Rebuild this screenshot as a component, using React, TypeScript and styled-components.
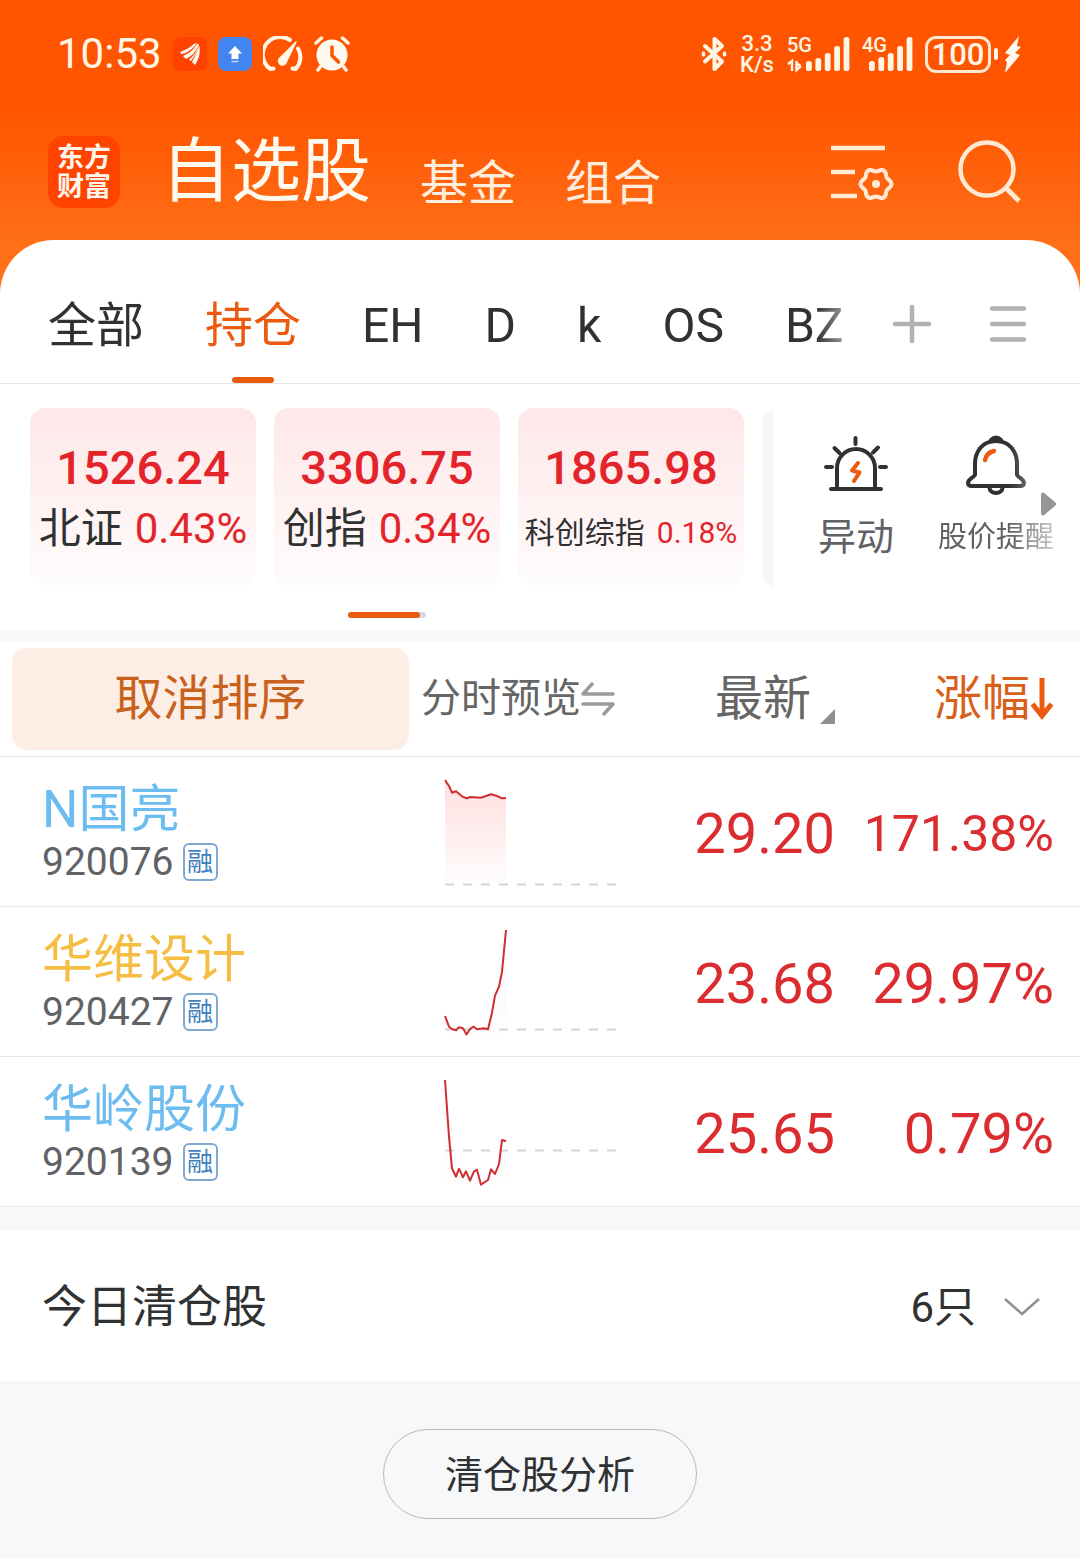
import React from "react";
import styled, { createGlobalStyle, css } from "styled-components";

const GlobalStyle = createGlobalStyle`
  * { box-sizing: border-box; }
  body {
    margin: 0;
    background: #f7f8fa;
    color: #303133;
    font-family: Roboto, "Noto Sans CJK SC", "Liberation Sans", sans-serif;
  }
  button {
    margin: 0;
    padding: 0;
    border: 0;
    background: none;
    color: inherit;
    font: inherit;
    cursor: pointer;
  }
  svg { display: block; flex: none; }
`;

const Page = styled.div`
  background: linear-gradient(180deg, #ff5500 0, #ff5500 110px, #ff7019 250px, #ff7019 300px, #f7f8fa 300px);
`;

/* ---------- status bar ---------- */

const StatusBar = styled.div`
  display: flex;
  align-items: center;
  justify-content: space-between;
  height: 108px;
  padding: 0 58px 0 57px;
  color: #fff6e6;
`;

const StatusGroup = styled.div<{ $gap: number }>`
  display: flex;
  align-items: center;
  gap: ${(p) => p.$gap}px;
`;

const Clock = styled.time`
  font-size: 42px;
  line-height: 48px;
`;

const NetSpeed = styled.div`
  width: 36px;
  font-size: 22px;
  font-weight: 500;
  line-height: 21px;
  text-align: center;
`;

const Signal = styled.div`
  position: relative;
`;

const SignalLabel = styled.span`
  position: absolute;
  top: 0;
  left: 0;
  font-size: 20px;
  font-weight: 500;
  line-height: 20px;
`;

const Power = styled.div`
  display: flex;
  align-items: center;
  gap: 6px;
`;

const Battery = styled.div`
  display: flex;
  align-items: center;
  gap: 3px;
  &::after {
    content: "";
    width: 4px;
    height: 12px;
    border-radius: 2px;
    background: #fff6e6;
  }
`;

const BatteryBody = styled.span`
  width: 66px;
  height: 37px;
  border: 3px solid #ffe8d2;
  border-radius: 11px;
  font-size: 31px;
  font-weight: 500;
  line-height: 32px;
  text-align: center;
`;

/* ---------- header ---------- */

const Header = styled.header`
  display: flex;
  align-items: center;
  height: 132px;
  padding: 0 58px 4px 48px;
  color: #fffaf0;
`;

const Logo = styled.a`
  display: grid;
  place-content: center;
  width: 72px;
  height: 72px;
  padding-top: 2px;
  border-radius: 15px;
  background: #ff4400;
  color: #fff6ec;
  font-size: 27px;
  font-weight: 700;
  line-height: 29px;
  text-align: center;
  text-decoration: none;
`;

const Sections = styled.nav`
  display: flex;
  flex: 1;
  align-items: flex-end;
  gap: 49px;
  margin-left: 41px;
`;

const SectionLink = styled.a<{ $current?: boolean }>`
  color: ${(p) => (p.$current ? "#fffaf0" : "#ffeedd")};
  font-size: ${(p) => (p.$current ? 70 : 48)}px;
  line-height: ${(p) => (p.$current ? 72 : 48)}px;
  text-decoration: none;
  white-space: nowrap;
`;

const HeaderTools = styled.div`
  display: flex;
  align-items: center;
  gap: 64px;
`;

/* ---------- white sheet ---------- */

const Sheet = styled.main`
  overflow: hidden;
  border-radius: 54px 54px 0 0;
  background: #fff;
`;

const TabBar = styled.div`
  display: flex;
  align-items: center;
  height: 144px;
  padding: 0 48px;
  border-bottom: 1px solid #e4e5e7;
`;

const Tabs = styled.nav`
  display: flex;
  flex: 1;
  gap: 61px;
  height: 143px;
  overflow: hidden;
  mask-image: linear-gradient(90deg, #000 0, #000 calc(100% - 76px), transparent calc(100% - 20px));
`;

const Tab = styled.button<{ $active?: boolean }>`
  display: flex;
  flex: none;
  flex-direction: column;
  align-items: center;
  padding-top: 56px;
  color: ${(p) => (p.$active ? "#ea5b10" : "#303133")};
  font-size: 48px;
  line-height: 60px;
  ${(p) =>
    p.$active &&
    css`
      &::after {
        content: "";
        width: 42px;
        height: 6px;
        margin-top: auto;
        border-radius: 3px;
        background: #ea5b10;
      }
    `}
`;

const TabTools = styled.div`
  display: flex;
  align-items: center;
  gap: 56px;
  padding: 24px 4px 0 0;
`;

const Overview = styled.section`
  display: flex;
  height: 246px;
  padding-top: 24px;
`;

const Indices = styled.div`
  display: flex;
  flex: 1;
  flex-direction: column;
  align-items: center;
  min-width: 0;
  gap: 25px;
`;

const IndexList = styled.div`
  display: flex;
  align-self: stretch;
  gap: 18px;
  padding-left: 30px;
  overflow: hidden;
`;

const IndexCard = styled.button<{ $flat?: boolean }>`
  display: flex;
  flex: none;
  flex-direction: column;
  align-items: center;
  gap: 4px;
  width: 226px;
  height: 179px;
  padding-top: 32px;
  border-radius: 15px;
  background: ${(p) => (p.$flat ? "#f7f7fa" : "linear-gradient(180deg, #fee8e9 0%, #fff3f3 60%, #fefcfd 100%)")};
`;

const IndexValue = styled.strong`
  color: #e3242a;
  font-size: 47px;
  font-weight: 500;
  line-height: 56px;
`;

const IndexLabel = styled.span<{ $small?: boolean }>`
  display: flex;
  align-items: center;
  gap: 12px;
  height: 56px;
  padding-top: ${(p) => (p.$small ? 10 : 2)}px;
  font-size: ${(p) => (p.$small ? 30 : 42)}px;
  line-height: 56px;
  white-space: nowrap;
`;

const Rise = styled.span`
  color: #e3242a;
`;

const ScrollTrack = styled.div`
  width: 78px;
  height: 6px;
  border-radius: 3px;
  background: #d8d9dc;
  &::before {
    content: "";
    display: block;
    width: 72px;
    height: 6px;
    border-radius: 3px;
    background: #ea5b10;
  }
`;

const Actions = styled.div`
  position: relative;
  display: flex;
  width: 306px;
  padding: 27px 14px 0 12px;
`;

const ActionButton = styled.button<{ $fade?: boolean }>`
  display: flex;
  flex: 1;
  flex-direction: column;
  align-items: center;
  gap: 16px;
  height: 128px;
  color: #606266;
  font-size: ${(p) => (p.$fade ? 29 : 38)}px;
  line-height: 52px;
  white-space: nowrap;
  ${(p) =>
    p.$fade &&
    css`
      mask-image: linear-gradient(90deg, #000 60%, rgba(0, 0, 0, 0.25) 95%);
    `}
`;

const MoreArrow = styled.svg`
  position: absolute;
  top: 84px;
  right: 24px;
`;

const Divider = styled.div<{ $h: number }>`
  height: ${(p) => p.$h}px;
  background: #f7f8fa;
`;

/* ---------- stock table ---------- */

const StockTable = styled.table`
  width: 100%;
  border-spacing: 0;
  table-layout: fixed;
`;

const Head = styled.th<{ $w?: number; $align?: string; $pad?: string }>`
  width: ${(p) => (p.$w ? p.$w + "px" : "auto")};
  height: 115px;
  padding: ${(p) => p.$pad || "0"};
  border-bottom: 1px solid #e8e9eb;
  font-weight: 400;
  text-align: ${(p) => p.$align || "left"};
`;

const CancelSort = styled.button`
  display: block;
  width: 100%;
  height: 102px;
  border-radius: 15px;
  background: #fdeee5;
  color: #c8611c;
  font-size: 48px;
  line-height: 60px;
`;

const SortButton = styled.button<{ $active?: boolean; $small?: boolean }>`
  display: inline-flex;
  align-items: center;
  color: ${(p) => (p.$active ? "#d8601a" : "#666")};
  font-size: ${(p) => (p.$small ? 40 : 48)}px;
  line-height: 60px;
  white-space: nowrap;
`;

const Corner = styled.span`
  align-self: flex-end;
  margin: 0 0 5px 9px;
  border-bottom: 15px solid #8e8e93;
  border-left: 15px solid transparent;
`;

const Cell = styled.td<{ $pad?: string }>`
  height: 150px;
  padding: ${(p) => p.$pad || "0"};
  border-bottom: 1px solid #e8e9eb;
  vertical-align: middle;
`;

const StockName = styled.div<{ $color: string }>`
  padding-top: 2px;
  color: ${(p) => p.$color};
  font-size: 51px;
  line-height: 58px;
`;

const StockCode = styled.div`
  display: flex;
  align-items: center;
  gap: 9px;
  color: #606266;
  font-size: 39px;
  line-height: 46px;
`;

const Margin = styled.span`
  width: 35px;
  height: 38px;
  border: 2px solid #7fa9d0;
  border-radius: 6px;
  color: #3f7fbd;
  font-size: 26px;
  line-height: 35px;
  text-align: center;
`;

const Figure = styled.td<{ $tight?: boolean; $end?: boolean }>`
  padding: 4px ${(p) => (p.$end ? 26 : 0)}px 0 0;
  border-bottom: 1px solid #e8e9eb;
  color: #db2c30;
  font-size: ${(p) => (p.$tight ? 50 : 56)}px;
  line-height: 64px;
  text-align: right;
`;

/* ---------- cleared positions ---------- */

const Cleared = styled.button`
  display: flex;
  align-items: center;
  justify-content: space-between;
  width: 100%;
  height: 150px;
  padding: 4px 40px 0 42px;
  font-size: 45px;
  line-height: 60px;
`;

const ClearedCount = styled.span`
  display: flex;
  align-items: center;
  gap: 28px;
  font-size: 42px;
`;

const Footer = styled.footer`
  display: flex;
  justify-content: center;
  padding: 48px 0 40px;
  background: #f7f8fa;
`;

const Analysis = styled.button`
  height: 90px;
  padding: 2px 61px 0;
  border: 1px solid #b9bbbf;
  border-radius: 45px;
  font-size: 38px;
  line-height: 56px;
`;

/* ---------- drawings ---------- */

type BarsProps = { x: number; tops: number[]; width: number; traffic?: boolean };

const Bars = ({ x, tops, width, traffic }: BarsProps) => (
  <svg width={width} height="38" viewBox={`0 0 ${width} 38`} aria-hidden="true">
    {tops.map((top, i) => (
      <rect key={i} x={x + i * 9.4} y={top} width="5.8" height={36 - top} rx="2.6" fill="#fff6e6" />
    ))}
    {traffic && <path d="M1 29l4-3v10M9.500 26v9l4.500-4M9.500 28l4 3" fill="none" stroke="#fff6e6" strokeWidth="2.400" />}
  </svg>
);

const gearPath = (() => {
  const points: string[] = [];
  for (let i = 0; i <= 72; i++) {
    const a = (i / 72) * Math.PI * 2;
    const r = 14 + 1.5 * Math.cos(6 * a);
    points.push(`${(45 + r * Math.cos(a)).toFixed(1)} ${(44 + r * Math.sin(a)).toFixed(1)}`);
  }
  return `M${points.join("L")}Z`;
})();

type Stock = {
  name: string;
  code: string;
  color: string;
  price: string;
  change: string;
  base: number;
  tint: number;
  line: string;
};

const stocks: Stock[] = [
  {
    name: "N国亮",
    code: "920076",
    color: "#6cbcf0",
    price: "29.20",
    change: "171.38%",
    base: 127,
    tint: 0.16,
    line: "0 23 4 29 7 35.7 11 34.3 18 40 22 41.3 25 40 36 40.7 41 39 46 37.3 52 39 57 41.3 61 41",
  },
  {
    name: "华维设计",
    code: "920427",
    color: "#f5bd42",
    price: "23.68",
    change: "29.97%",
    base: 122,
    tint: 0.05,
    line: "0 109 4 119.7 7 122 11 123.3 14 120.3 18 121.3 21.5 127.5 25 122 28.5 119.7 32 122.3 39 121.3 43 122.3 47 105.7 50 88.7 54 79.7 57 64.7 61 23",
  },
  {
    name: "华岭股份",
    code: "920139",
    color: "#6cbcf0",
    price: "25.65",
    change: "0.79%",
    base: 93,
    tint: 0.03,
    line: "0 23 4 79.7 7 111.3 11 119.7 14 111.7 18 120.3 21 114.3 25 123.7 29 114.3 32 112.7 36 127.7 43 123 46 112.3 50 117 54 107 57 83 61 84.3",
  },
];

const Spark = ({ stock }: { stock: Stock }) => (
  <svg width="172" height="149" viewBox="0 0 172 149" overflow="visible" role="img" aria-label={stock.name}>
    <defs>
      <linearGradient id={`fill-${stock.code}`} x1="0" y1="0" x2="0" y2="1">
        <stop offset="0" stopColor="#f33" stopOpacity={stock.tint} />
        <stop offset="1" stopColor="#f33" stopOpacity="0.01" />
      </linearGradient>
    </defs>
    <path d={`M0 127L${stock.line} 61 127Z`} fill={`url(#fill-${stock.code})`} />
    <path d={`M0 ${stock.base + 0.5}H172`} stroke="#d3d5d9" strokeWidth="2" strokeDasharray="9 9" />
    <polyline points={stock.line} fill="none" stroke="#cf2e30" strokeWidth="2" strokeLinejoin="round" />
  </svg>
);

const indices = [
  { value: "1526.24", label: "北证", change: "0.43%" },
  { value: "3306.75", label: "创指", change: "0.34%" },
  { value: "1865.98", label: "科创综指", change: "0.18%", small: true },
];

export default function App() {
  return (
    <Page>
      <GlobalStyle />
      <StatusBar>
        <StatusGroup $gap={11}>
          <Clock>10:53</Clock>
          <svg width="34" height="34" viewBox="0 0 34 34" aria-hidden="true">
            <rect width="34" height="34" rx="7" fill="#ff4200" />
            <g fill="#fff6ec">
              <path d="M7 15C13 13 17 10 21 7L24 6C20 12 13 17 8 17Z" />
              <path d="M10 19C17 16 21 12 24 7L26 7C24 14 18 20 13 22Z" />
              <path d="M16 23C21 18 25 13 26 8C28 15 26 22 22 28L19 25C21 21 23 17 24 14C22 18 20 21 18 24Z" />
            </g>
          </svg>
          <svg width="34" height="34" viewBox="0 0 34 34" aria-hidden="true">
            <rect width="34" height="34" rx="8" fill="#4285f0" />
            <path d="M17 9l7 7.5h-3.500V22h-7v-5.500H10z" fill="#fff" />
            <path d="M13.500 24.500h7" stroke="#c5dbfa" strokeWidth="1.500" />
          </svg>
          <svg width="40" height="36" viewBox="0 0 40 36" fill="none" stroke="#fff6e6" strokeWidth="4" strokeLinecap="round" strokeLinejoin="round" aria-hidden="true">
            <path d="M10.500 32.500L7.500 33A17 17 0 0 1 27 4M35 12.500a17 17 0 0 1-2.500 20.500l-3-.5" />
            <path d="M33 6L17.500 21.500a4 4 0 1 0 6 4z" fill="#fff6e6" strokeWidth="1.500" />
          </svg>
          <svg width="36" height="36" viewBox="0 0 36 36" fill="none" stroke="#fff6e6" strokeLinecap="round" aria-hidden="true">
            <circle cx="18" cy="19" r="15.500" fill="#fffaf0" stroke="none" />
            <path d="M2 7l5.500-5M34 7l-5.500-5M7 30l-3 4M29 30l3 4" strokeWidth="3.500" />
            <path d="M18 11v8.500l6.500 6.500" stroke="#ff5500" strokeWidth="3.500" />
          </svg>
        </StatusGroup>
        <StatusGroup $gap={12}>
          <svg width="26" height="36" viewBox="0 0 26 36" fill="none" stroke="#fff6e6" strokeWidth="4" strokeLinejoin="round" strokeLinecap="round" aria-hidden="true">
            <path d="M4 10l17 15.500L13.500 33V3L21 10 4 25.500" />
            <path d="M2.500 17v2M23.500 17v2" strokeWidth="3.500" />
          </svg>
          <NetSpeed>3.3 K/s</NetSpeed>
          <Signal>
            <SignalLabel>5G</SignalLabel>
            <Bars width={63} x={19} tops={[26, 23, 18, 11, 2]} traffic />
          </Signal>
          <Signal>
            <SignalLabel>4G</SignalLabel>
            <Bars width={51} x={7} tops={[26, 22, 18, 11, 2]} />
          </Signal>
          <Power>
            <Battery>
              <BatteryBody>100</BatteryBody>
            </Battery>
            <svg width="18" height="38" viewBox="0 0 18 38" aria-hidden="true">
              <path d="M15 1L1 18l5 2-5 5 2 2-2 11L16 20l-5-2 6-6-4-1z" fill="#fffaf0" />
            </svg>
          </Power>
        </StatusGroup>
      </StatusBar>

      <Header>
        <Logo href="#home">
          东方
          <br />
          财富
        </Logo>
        <Sections>
          <SectionLink href="#stocks" $current>自选股</SectionLink>
          <SectionLink href="#funds">基金</SectionLink>
          <SectionLink href="#portfolio">组合</SectionLink>
        </Sections>
        <HeaderTools>
          <button aria-label="列表设置">
            <svg width="63" height="64" viewBox="0 0 63 64" fill="none" stroke="#ffe9d2" strokeWidth="4.500">
              <path d="M0 8h54M0 32h24M0 56h26" />
              <path d={gearPath} strokeWidth="4" />
              <circle cx="45" cy="44" r="4" fill="#ffe9d2" stroke="none" />
            </svg>
          </button>
          <button aria-label="搜索">
            <svg width="64" height="64" viewBox="0 0 64 64" fill="none" stroke="#ffe9d2" strokeWidth="4.500">
              <circle cx="29" cy="29" r="26.500" />
              <path d="M47 47l14 14" strokeWidth="5" />
            </svg>
          </button>
        </HeaderTools>
      </Header>

      <Sheet>
        <TabBar>
          <Tabs>
            <Tab>全部</Tab>
            <Tab $active>持仓</Tab>
            <Tab>EH</Tab>
            <Tab>D</Tab>
            <Tab>k</Tab>
            <Tab>OS</Tab>
            <Tab>BZ</Tab>
          </Tabs>
          <TabTools>
            <button aria-label="添加分组">
              <svg width="40" height="40" viewBox="0 0 40 40" stroke="#b2b2b2" strokeWidth="4.500" strokeLinecap="round">
                <path d="M20 3v34M3 20h34" />
              </svg>
            </button>
            <button aria-label="分组菜单">
              <svg width="40" height="40" viewBox="0 0 40 40" stroke="#b2b2b2" strokeWidth="4.500" strokeLinecap="round">
                <path d="M4 4.500h32M4 20h32M4 35.500h32" />
              </svg>
            </button>
          </TabTools>
        </TabBar>

        <Overview>
          <Indices>
            <IndexList>
              {indices.map((item) => (
                <IndexCard key={item.label}>
                  <IndexValue>{item.value}</IndexValue>
                  <IndexLabel $small={item.small}>
                    <span>{item.label}</span>
                    <Rise>{item.change}</Rise>
                  </IndexLabel>
                </IndexCard>
              ))}
              <IndexCard $flat aria-label="更多指数" />
            </IndexList>
            <ScrollTrack />
          </Indices>
          <Actions>
            <ActionButton>
              <svg width="64" height="60" viewBox="0 0 64 60" fill="none" stroke="#303133" strokeWidth="4" strokeLinecap="round" aria-hidden="true">
                <path d="M13 53V33a19 19 0 0 1 38 0v20M7 54h50M2 32h6M56 32h6M31.500 3v6M10.500 13l5 5M54 12.500l-5 5" />
                <path d="M34 28l-6 7.500 7.500 2L30 46" stroke="#ea5b10" strokeLinejoin="round" />
              </svg>
              异动
            </ActionButton>
            <ActionButton $fade>
              <svg width="60" height="60" viewBox="0 0 60 60" fill="none" stroke="#303133" strokeWidth="4" strokeLinejoin="round" strokeLinecap="round" aria-hidden="true">
                <path d="M30 6C16 6 9 17 9 29V40C7 43 2 44 2 48Q2 51 6 51H54Q58 51 58 48C58 44 53 43 51 40V29C51 17 44 6 30 6Z" />
                <path d="M25 5Q30 0 35 5Z" fill="#303133" />
                <path d="M23.500 53a6.500 5 0 0 0 13 0" />
                <path d="M19 25c1-5 4-8 9-9" stroke="#ea5b10" strokeWidth="4.500" />
              </svg>
              股价提醒
            </ActionButton>
            <MoreArrow width="16" height="24" viewBox="0 0 16 24" aria-hidden="true">
              <path d="M3 2.500L14 12 3 21.500z" fill="#969696" stroke="#969696" strokeWidth="4" strokeLinejoin="round" />
            </MoreArrow>
          </Actions>
        </Overview>

        <Divider $h={12} />

        <StockTable>
          <thead>
            <tr>
              <Head $pad="0 12px">
                <CancelSort>取消排序</CancelSort>
              </Head>
              <Head $w={220}>
                <SortButton $small>
                  分时预览
                  <svg width="34" height="36" viewBox="0 0 34 36" fill="none" stroke="#9b9b9b" strokeWidth="3.500" strokeLinecap="round" strokeLinejoin="round" aria-hidden="true">
                    <path d="M11 3L2 13h30M2 23h30l-9 10" />
                  </svg>
                </SortButton>
              </Head>
              <Head $w={194} $align="right">
                <SortButton>
                  最新
                  <Corner />
                </SortButton>
              </Head>
              <Head $w={245} $align="right" $pad="0 26px 0 0" aria-sort="descending">
                <SortButton $active>
                  涨幅
                  <svg width="24" height="44" viewBox="0 0 24 44" fill="none" stroke="#ea5b10" strokeWidth="5" aria-hidden="true">
                    <path d="M12 1v38M2.500 27L12 39l9.500-12" />
                  </svg>
                </SortButton>
              </Head>
            </tr>
          </thead>
          <tbody>
            {stocks.map((stock) => (
              <tr key={stock.code}>
                <Cell $pad="0 0 0 42px">
                  <StockName $color={stock.color}>{stock.name}</StockName>
                  <StockCode>
                    {stock.code}
                    <Margin>融</Margin>
                  </StockCode>
                </Cell>
                <Cell $pad="0 0 0 24px">
                  <Spark stock={stock} />
                </Cell>
                <Figure>{stock.price}</Figure>
                <Figure $end $tight={stock.change.length > 6}>
                  {stock.change}
                </Figure>
              </tr>
            ))}
          </tbody>
        </StockTable>

        <Divider $h={24} />

        <Cleared>
          今日清仓股
          <ClearedCount>
            6只
            <svg width="36" height="20" viewBox="0 0 36 20" fill="none" stroke="#8f9194" strokeWidth="2.500" aria-hidden="true">
              <path d="M1 1l17 15L35 1" />
            </svg>
          </ClearedCount>
        </Cleared>

        <Footer>
          <Analysis>清仓股分析</Analysis>
        </Footer>
      </Sheet>
    </Page>
  );
}
